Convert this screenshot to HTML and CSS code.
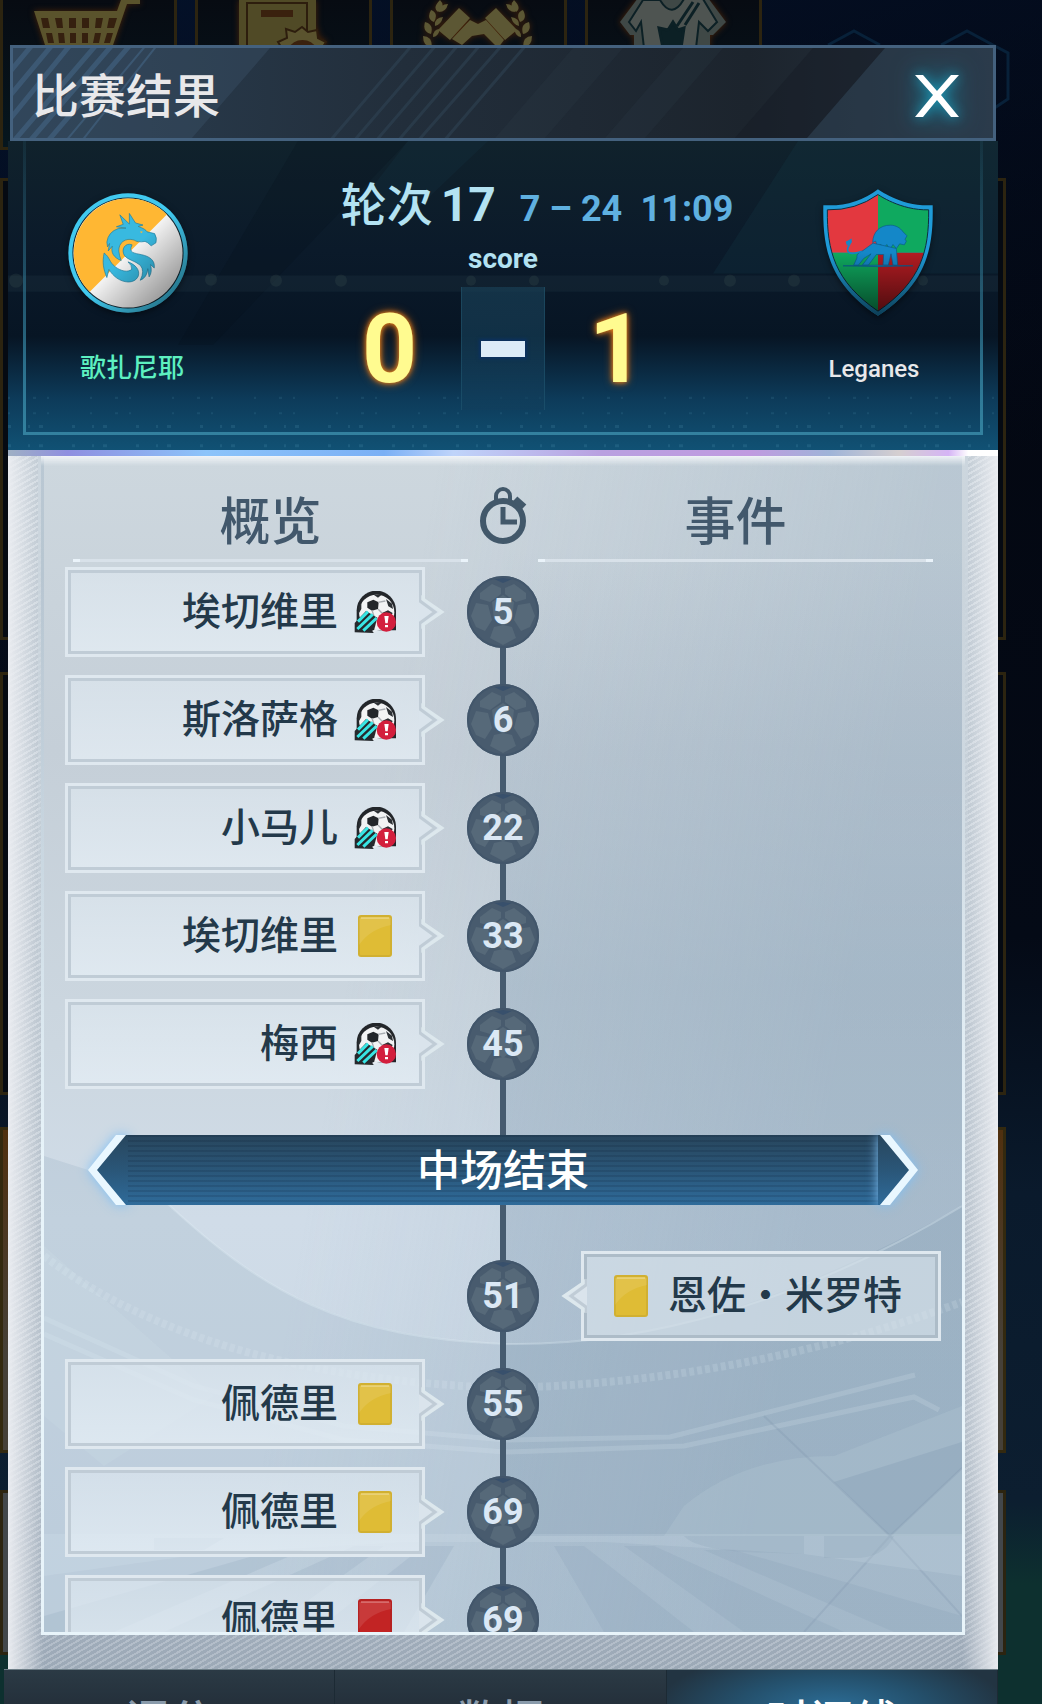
FILE: index.html
```
<!DOCTYPE html>
<html lang="zh-CN">
<head>
    <meta charset="UTF-8">
    <meta name="viewport" content="width=device-width, initial-scale=1.0">
    <title>比赛结果</title>
    <link rel="stylesheet" href="styles.css">
</head>
<body>
    <!-- shared shapes -->
    <svg class="defs" width="0" height="0" aria-hidden="true">
        <defs>
            <linearGradient id="shade" x1="0" y1="0" x2="1" y2="1">
                <stop offset="0.5" stop-color="#000" stop-opacity="0"/>
                <stop offset="1" stop-color="#000" stop-opacity="0.55"/>
            </linearGradient>
            <linearGradient id="shadeDown" x1="0" y1="0" x2="0" y2="1">
                <stop offset="0.5" stop-color="#000" stop-opacity="0"/>
                <stop offset="1" stop-color="#000" stop-opacity="0.6"/>
            </linearGradient>
            <linearGradient id="bar" x1="0" y1="0" x2="0" y2="1">
                <stop offset="0" stop-color="#28465d"/>
                <stop offset="0.5" stop-color="#2a5678"/>
                <stop offset="1" stop-color="#2f6b9a"/>
            </linearGradient>
            <symbol id="ball" viewBox="0 0 72 72">
                <circle cx="36" cy="36" r="36" fill="#485b6e"/>
                <g fill="#566979">
                    <path d="M25 26l11-7 11 7-2 17-9 7-9-7z"/>
                    <path d="M13 17l12-9 9 4v6l-11 8-10-3z"/>
                    <path d="M59 17L47 8l-9 4v6l11 8 10-3z"/>
                    <path d="M4 40l5-13 12 2 4 15-7 11-9-4z"/>
                    <path d="M68 40l-5-13-12 2-4 15 7 11 9-4z"/>
                    <path d="M27 51l9-2 9 2 4 11-13 7-13-7z"/>
                </g>
                <path d="M27 3l9 4 9-4-9-1z" fill="#38506c"/>
                <circle cx="36" cy="36" r="35" fill="none" stroke="#42566b" stroke-width="2"/>
            </symbol>
            <symbol id="chance" viewBox="0 0 126 126">
                <path d="M8 118V58a58 58 0 0 1 118 0v60z" fill="#23262a"/>
                <circle cx="68" cy="64" r="53" fill="#f2f3f4"/>
                <path d="M40 34l18-8 16 8-2 20-18 5-14-9z" fill="#23262a"/>
                <path d="M60 12h22l-10 8zM96 24l18 14 3 16-14-8zM14 48l8-12v18l-8 14zM84 66l18-8 14 8-8 14-20 2z" fill="#2c3034"/>
                <path d="M72 34l22-4M54 58l6 18M72 54l14 14" stroke="#a9adb2" stroke-width="4"/>
                <path d="M2 124V96l34-36 34 20-12 46z" fill="#26292d"/>
                <path d="M12 92l30-30M10 114l46-44M28 119l40-38" stroke="#38e5e4" stroke-width="9"/>
                <path d="M56 121l24-8" stroke="#e7edf2" stroke-width="6"/>
                <circle cx="97" cy="93" r="29" fill="#d31f3d"/>
                <path d="M91 75h13l-3 22h-7zM93 102h9v7h-9z" fill="#fff"/>
            </symbol>
            <symbol id="card" viewBox="0 0 34 42">
                <rect width="34" height="42" rx="3" fill="currentColor"/>
                <path d="M1 30Q12 14 33 10V3H1z" fill="#fff" fill-opacity="0.1"/>
                <path d="M3 2h28v2H3z" fill="#fff" fill-opacity="0.25"/>
                <rect x="1" y="1" width="32" height="40" rx="2" fill="none" stroke="#000" stroke-opacity="0.06" stroke-width="2"/>
            </symbol>
            <symbol id="tip" viewBox="0 0 26 34">
                <path d="M0 1h4l1 3 17 13L5 30l-1 3H0z" fill="#dae4ec"/>
                <path d="M1 0v6l15 11L1 28v6" fill="none" stroke="#c0ccd6" stroke-width="3"/>
                <path d="M4 0v4l19 13L4 30v4" fill="none" stroke="#dde8ed" stroke-width="3"/>
            </symbol>
        </defs>
    </svg>

    <div class="screen">
        <!-- dimmed lobby menu -->
        <div class="lobby" aria-hidden="true">
            <div class="shortcuts">
                <div class="tile">
                    <svg width="170" height="48" viewBox="3 0 170 48" fill="#5a532c">
                        <path d="M34 11h83l5-14h18v7h-13l-15 44H46z"/>
                        <path d="M41 18h7l2 10h-7zM55 18h7l1 10h-6zM69 18h7v10h-7zM82 18h7v10h-7zM96 18h7l-2 10h-6zM109 18h8l-3 10h-7zM46 33h6l2 10h-6zM58 33h6l1 10h-6zM70 33h6v10h-6zM82 33h6v10h-6zM95 33h6l-2 10h-6zM107 33h6l-3 10h-6z" fill="#35200f"/>
                    </svg>
                </div>
                <div class="tile">
                    <svg width="170" height="48" viewBox="198 0 170 48">
                        <path d="M239-2h77v50h-77z" fill="#504a26"/>
                        <path d="M247 48V3h60v32" fill="none" stroke="#2d1d0d" stroke-width="2"/>
                        <path d="M261 10h32v7h-32z" fill="#3a210e"/>
                        <path d="M278 42l9-4-1-9 9 3 7-5 6 5 9-2 1 8 8 4-5 8h-38z" fill="#5a532e" stroke="#2d1d0d" stroke-width="2"/>
                        <path d="M289 48a14 11 0 0 1 27 0z" fill="#3a210e"/>
                    </svg>
                </div>
                <div class="tile">
                    <svg width="170" height="48" viewBox="393 0 170 48" fill="#5c5734">
                        <path d="M459 8l11 10-20 22-12-10zM496 8l-11 10 20 22 12-10zM470 20l8 4 8-4 18 20-6 8-14-14-12 2-10 9-10-6z"/>
                        <path d="M440 0q6 6-2 12-6-4 2-12zM431 10q8 3 3 12-8-3-3-12zM425 22q9 2 6 12-9-2-6-12zM423 36q9 0 9 11-9 0-9-11zM448 4q-2 8-9 8 1-8 9-8zM443 17q-2 8-8 9-1-8 8-9zM440 29q-2 8-7 8 0-8 7-8z"/>
                        <path d="M514 0q-6 6 2 12 6-4-2-12zM523 10q-8 3-3 12 8-3 3-12zM529 22q-9 2-6 12 9-2 6-12zM532 36q-9 0-9 11 9 0 9-11zM506 4q2 8 9 8-1-8-9-8zM511 17q2 8 8 9 1-8-8-9zM514 29q2 8 7 8 0-8-7-8z"/>
                    </svg>
                </div>
                <div class="tile">
                    <svg width="170" height="48" viewBox="588 0 170 48" fill="#3f4846">
                        <path d="M620 22l18-24h70l18 24-13 13h-3v13h-76V35h-4z"/>
                        <path d="M629 22l14-22h17q12 20 24-1h19l14 23-9 9-9-9-3 26h-52l-3-26-5 9z" fill="#4e5451" stroke="#0c2025" stroke-width="2"/>
                        <path d="M668 30l5-8 5 8 6-2-3 20h-18l-4-20zM693 2l-16 24M699 3l-14 22" fill="#0c2025" stroke="#0c2025" stroke-width="3"/>
                    </svg>
                </div>
                <svg class="hexes" width="260" height="110" viewBox="782 0 260 110" fill="none" stroke="#082139" stroke-width="3">
                    <path d="M826 45l26-14 26 14M939 45l26-14 26 14 15 8v46l-15 10"/>
                </svg>
            </div>
            <div class="block block-a"></div>
            <div class="block block-b"></div>
            <div class="block block-c"></div>
            <div class="block block-d"></div>
        </div>

        <main class="dialog">
            <header class="titlebar">
                <svg class="art" viewBox="0 0 980 90" preserveAspectRatio="none" aria-hidden="true">
                    <path d="M0 0h257l-78 90H0z" fill="#3c5268" fill-opacity="0.4"/>
                    <g stroke="#456788" stroke-width="5" stroke-opacity="0.55">
                        <path d="M-40 68L20-4M-30 80L40-4M-20 92L58-4M0 94L84-4M16 94L100-4M34 94L118-4"/>
                        <path d="M52 94L134-4M68 94L145-4" stroke-width="2"/>
                    </g>
                    <g stroke="#34495c" stroke-width="3" stroke-opacity="0.45">
                        <path d="M316 94L400-4M340 94L424-4M362 94L446-4M384 94L468-4M404 94L490-4M430 94L514-4"/>
                    </g>
                    <path d="M560 0h50l-78 90h-50zM670 0h40l-78 90h-40z" fill="#33424e" fill-opacity="0.18"/>
                    <path d="M800 0h72l-78 90h-72z" fill="#151c25" fill-opacity="0.5"/>
                    <path d="M872 0h108v90H794z" fill="#30475a" fill-opacity="0.45"/>
                </svg>
                <h1>比赛结果</h1>
                <button class="close" type="button" aria-label="关闭">
                    <svg width="44" height="42" viewBox="0 0 44 42" aria-hidden="true">
                        <path d="M0 0h8l14 16L36 0h8L26 20l18 22h-8L22 25 8 42H0l18-22z" fill="#fff"/>
                    </svg>
                </button>
            </header>

            <section class="scoreboard">
                <svg class="art" viewBox="0 0 990 309" preserveAspectRatio="none" aria-hidden="true">
                    <path d="M290 0h110L205 200H170z" fill="#06101a" fill-opacity="0.2"/>
                    <path d="M400 0h80l-75 70h-60z" fill="#1d4454" fill-opacity="0.15"/>
                    <path d="M790 0h200v130H705z" fill="#17404e" fill-opacity="0.22"/>
                    <path d="M0 132h990v16H0z" fill="#35525f" fill-opacity="0.16"/>
                    <g fill="#6c8075" fill-opacity="0.12">
                        <circle cx="8" cy="137" r="7"/><circle cx="74" cy="138" r="6"/><circle cx="138" cy="138" r="5"/><circle cx="203" cy="136" r="6"/><circle cx="268" cy="137" r="6"/><circle cx="333" cy="137" r="6"/><circle cx="463" cy="137" r="5"/><circle cx="526" cy="137" r="5"/><circle cx="656" cy="137" r="5"/><circle cx="722" cy="137" r="6"/><circle cx="786" cy="137" r="6"/><circle cx="850" cy="137" r="5"/><circle cx="915" cy="137" r="5"/>
                    </g>
                    <path d="M0 252h990M0 267h990" stroke="#7ec6dd" stroke-width="2" stroke-opacity="0.1" stroke-dasharray="2 23 3 11 2 41"/>
                    <path d="M0 280h990M0 299h990" stroke="#7ec6dd" stroke-width="3" stroke-opacity="0.12" stroke-dasharray="3 17 2 9 4 29"/>
                </svg>
                <div class="frame">
                    <div class="team home">
                        <svg width="120" height="120" viewBox="0 0 352 352" aria-hidden="true">
                            <circle cx="176" cy="176" r="175" fill="#41c9ef"/>
                            <circle cx="176" cy="176" r="163" fill="#102733"/>
                            <circle cx="176" cy="176" r="160" fill="#f4f4f4"/>
                            <path d="M64 290A160 160 0 0 1 290 63z" fill="#ffb733"/>
                            <g transform="translate(-208 -46)" fill="#38b9e0" stroke="#1f7fa0" stroke-width="2">
                                <path d="M322 190Q326 160 356 150L378 149 350 145 370 138 360 110 388 137 388 106 406 134 428 140 414 144Q436 152 440 160L462 165Q470 178 466 192L452 201 442 192 434 188Q412 192 402 184C376 176 356 192 357 216Q358 230 364 244C342 236 333 220 338 202L326 216 330 194 324 204z"/>
                                <path d="M396 198C376 190 362 212 374 230 384 243 404 244 420 258Q434 274 420 302 440 294 442 268L446 292Q456 278 450 256L461 266C464 244 448 232 424 227 402 222 384 222 396 198z"/>
                                <path d="M314 222C332 236 328 248 346 262 362 275 384 280 395 270Q396 258 384 248C406 256 420 272 414 290 408 302 398 307 384 307 360 306 340 290 328 270L322 294C312 270 308 250 314 222z"/>
                            </g>
                            <path d="M420 158l8 2-6 4z" transform="translate(-208 -46)" fill="#ffb733"/>
                            <circle cx="176" cy="176" r="175" fill="url(#shade)"/>
                        </svg>
                        <p class="team-name">歌扎尼耶</p>
                    </div>

                    <div class="result">
                        <p class="round"><span class="label">轮次</span><span class="num">17</span><time>7 – 24&ensp;11:09</time></p>
                        <p class="caption">score</p>
                        <div class="goals">
                            <b>0</b>
                            <span class="dash"><i></i></span>
                            <b>1</b>
                        </div>
                    </div>

                    <div class="team away">
                        <svg width="110" height="127" viewBox="0 0 330 380" aria-hidden="true">
                            <g transform="translate(-906 -30)">
                                <path d="M1071 30Q1000 84 907 78C904 214 928 316 1071 410 1214 316 1238 214 1235 78 1142 84 1071 30 1071 30z" fill="#1f9bd8"/>
                                <clipPath id="shieldClip"><path d="M1071 46Q1004 94 919 92C918 214 940 306 1071 396 1202 306 1224 214 1223 92 1138 94 1071 46 1071 46z"/></clipPath>
                                <g clip-path="url(#shieldClip)">
                                    <path d="M906 30h165v191H906z" fill="#e3383f"/>
                                    <path d="M1071 30h165v191h-165z" fill="#0fa95f"/>
                                    <path d="M906 221h165v190H906z" fill="#0fa95f"/>
                                    <path d="M1071 221h165v190h-165z" fill="#b31c22"/>
                                </g>
                                <path d="M1071 46Q1004 94 919 92C918 214 940 306 1071 396 1202 306 1224 214 1223 92 1138 94 1071 46 1071 46z" fill="none" stroke="#0d3040" stroke-width="3"/>
                                <g fill="#1487c8" stroke="#0b5a8c" stroke-width="2">
                                    <path d="M1055 190C1056 158 1076 138 1108 138 1124 138 1138 146 1146 158L1158 170 1152 180 1156 186 1150 197 1136 194 1126 208 1116 196 1106 212 1098 196 1084 210 1080 196 1068 200 1064 186z"/>
                                    <path d="M1056 192L1026 214Q1004 224 1008 236L998 258H1012L1028 238 1050 224 1024 258H1042L1066 226 1088 226 1086 258H1102L1110 224 1116 258H1130L1126 208z"/>
                                    <path d="M966 260q100-4 210 0-100 5-210 0z"/>
                                </g>
                                <path d="M1022 216Q976 232 980 208L990 186" fill="none" stroke="#1487c8" stroke-width="5"/>
                                <path d="M974 188l18-10v12l-14 10z" fill="#1487c8"/>
                                <path d="M1071 30Q1000 84 907 78C904 214 928 316 1071 410 1214 316 1238 214 1235 78 1142 84 1071 30 1071 30z" fill="url(#shadeDown)"/>
                            </g>
                        </svg>
                        <p class="team-name">Leganes</p>
                    </div>
                </div>
            </section>

            <section class="sheet">
                <div class="panel">
                    <!-- stadium: bowl, roof, stands, boards, pitch -->
                    <svg class="art" viewBox="0 0 918 1176" preserveAspectRatio="none" aria-hidden="true">
                        <path d="M0 700L110 735C220 840 300 880 462 888V1176H0z" fill="#8aa3b8" fill-opacity="0.2"/>
                        <path d="M462 888C600 888 740 850 918 750V1080H462z" fill="#7d96ac" fill-opacity="0.22"/>
                        <path d="M110 735C220 840 300 882 462 888 600 890 760 846 918 750" fill="none" stroke="#e6f2f8" stroke-opacity="0.3" stroke-width="2"/>
                        <path d="M0 800Q160 922 462 932 700 926 918 846" fill="none" stroke="#e6f2f8" stroke-opacity="0.16" stroke-width="8" stroke-dasharray="5 3"/>
                        <path d="M0 862L150 930 300 970 462 984 626 981 871 919M0 878L150 944 300 984 462 996 640 990 870 941 895 954" fill="none" stroke="#e6f2f8" stroke-opacity="0.16" stroke-width="5"/>
                        <path d="M0 790L170 940 60 1010 0 960zM640 1050Q700 1000 790 1000L918 950V1080H620z" fill="#e6f2f8" fill-opacity="0.1"/>
                        <path d="M790 1026L918 986 918 1012 846 1080z" fill="#6d87a4" fill-opacity="0.2"/>
                        <path d="M720 960L846 1080 918 1160M846 1080L918 1012M846 1080L760 1176" fill="none" stroke="#6d879e" stroke-opacity="0.18" stroke-width="2"/>
                        <path d="M0 1078h918v42L760 1098 560 1086H360L160 1098 0 1120z" fill="#e6f2f8" fill-opacity="0.14"/>
                        <path d="M640 1080h120v18l-60-2q-50-4-60-16zM780 1080h70q-10 22-40 22h-30zM110 1082h70l-20 12h-50z" fill="#8aa3b8" fill-opacity="0.25"/>
                        <path d="M510 1090h30L650 1176H560zM580 1090h30L800 1176H700zM660 1094h30L918 1160V1176H850zM410 1090h-30L270 1176h90zM340 1090h-30L120 1176h100zM260 1094h-30L0 1160v16h70z" fill="#7d96ac" fill-opacity="0.16"/>
                    </svg>
                    <div class="heads">
                        <h2>概览</h2>
                        <svg width="48" height="57" viewBox="0 0 48 57" fill="none" stroke="#42586a" aria-label="时间" role="img">
                            <circle cx="24" cy="34" r="20" stroke-width="6"/>
                            <path d="M17 13V9a7 7 0 0 1 14 0v4" stroke-width="4"/>
                            <path d="M24 20v15h14" stroke-width="5"/>
                            <path d="M36 12l9 8" stroke-width="7"/>
                        </svg>
                        <h2>事件</h2>
                    </div>

                    <ol class="events">
                        <li class="event home-event">
                            <div class="bubble"><span>埃切维里</span><svg class="icon"><use href="#chance"/></svg><svg class="tip"><use href="#tip"/></svg></div>
                            <div class="minute"><svg><use href="#ball"/></svg><span>5</span></div>
                        </li>
                        <li class="event home-event">
                            <div class="bubble"><span>斯洛萨格</span><svg class="icon"><use href="#chance"/></svg><svg class="tip"><use href="#tip"/></svg></div>
                            <div class="minute"><svg><use href="#ball"/></svg><span>6</span></div>
                        </li>
                        <li class="event home-event">
                            <div class="bubble"><span>小马儿</span><svg class="icon"><use href="#chance"/></svg><svg class="tip"><use href="#tip"/></svg></div>
                            <div class="minute"><svg><use href="#ball"/></svg><span>22</span></div>
                        </li>
                        <li class="event home-event">
                            <div class="bubble"><span>埃切维里</span><svg class="icon yellow"><use href="#card"/></svg><svg class="tip"><use href="#tip"/></svg></div>
                            <div class="minute"><svg><use href="#ball"/></svg><span>33</span></div>
                        </li>
                        <li class="event home-event">
                            <div class="bubble"><span>梅西</span><svg class="icon"><use href="#chance"/></svg><svg class="tip"><use href="#tip"/></svg></div>
                            <div class="minute"><svg><use href="#ball"/></svg><span>45</span></div>
                        </li>
                        <li class="halftime">
                            <svg class="cap" viewBox="0 0 40 70" aria-hidden="true"><path d="M40 0h-3L7 35l30 35h3z" fill="url(#bar)"/><path d="M28 0h10L9 35l29 35H28L0 35z" fill="#e9f7ff"/></svg>
                            <strong>中场结束</strong>
                            <svg class="cap" viewBox="0 0 40 70" aria-hidden="true"><path d="M0 0h3l30 35L3 70H0z" fill="url(#bar)"/><path d="M12 0H2l29 35L2 70h10l28-35z" fill="#e9f7ff"/></svg>
                        </li>
                        <li class="event away-event">
                            <div class="minute"><svg><use href="#ball"/></svg><span>51</span></div>
                            <div class="bubble"><svg class="icon yellow"><use href="#card"/></svg><span>恩佐·米罗特</span><svg class="tip"><use href="#tip"/></svg></div>
                        </li>
                        <li class="event home-event">
                            <div class="bubble"><span>佩德里</span><svg class="icon yellow"><use href="#card"/></svg><svg class="tip"><use href="#tip"/></svg></div>
                            <div class="minute"><svg><use href="#ball"/></svg><span>55</span></div>
                        </li>
                        <li class="event home-event">
                            <div class="bubble"><span>佩德里</span><svg class="icon yellow"><use href="#card"/></svg><svg class="tip"><use href="#tip"/></svg></div>
                            <div class="minute"><svg><use href="#ball"/></svg><span>69</span></div>
                        </li>
                        <li class="event home-event">
                            <div class="bubble"><span>佩德里</span><svg class="icon red"><use href="#card"/></svg><svg class="tip"><use href="#tip"/></svg></div>
                            <div class="minute"><svg><use href="#ball"/></svg><span>69</span></div>
                        </li>
                    </ol>
                </div>
            </section>

            <nav class="tabs">
                <button type="button">评分</button>
                <button type="button">数据</button>
                <button type="button" class="active">时间线</button>
            </nav>
        </main>
    </div>
</body>
</html>
```
FILE: styles.css
```
* {
    box-sizing: border-box;
}
body {
    margin: 0;
    background: #040812;
    font-family: "Noto Sans CJK SC", "Noto Sans", sans-serif;
    font-weight: 500;
    color: #23394a;
}
h1, h2, p, ol {
    margin: 0;
    padding: 0;
    font-weight: 500;
}
button {
    border: 0;
    padding: 0;
    background: none;
    font: inherit;
    cursor: pointer;
}
.defs {
    position: absolute;
}
.art {
    position: absolute;
    inset: 0;
    width: 100%;
    height: 100%;
}
.screen {
    display: grid;
    grid-template: 100vh / 100%;
    overflow: hidden;
}

/* lobby behind the dialog */
.lobby {
    grid-area: 1 / 1;
    overflow: hidden;
    background: linear-gradient(160deg, rgba(4, 20, 48, 0.8) 0%, rgba(3, 6, 15, 0) 40%), linear-gradient(#03060f 0%, #040a16 55%, #0a1a2c 70%, #0c1e30 88%, #0d302f 93%);
}
.shortcuts {
    display: flex;
    gap: 18px;
    height: 150px;
}
.tile {
    flex: none;
    width: 177px;
    border: 3px solid #2c2410;
    border-top: 0;
    background: linear-gradient(#070b12, #06161e);
}
.tile svg {
    filter: drop-shadow(0 0 3px #4a2408);
}
.hexes {
    flex: none;
    margin-left: 4px;
}
.block {
    margin: 28px 36px 0 0;
    border: 3px solid #2c2410;
    background: #050a12;
}
.block-a {
    height: 462px;
}
.block-b {
    margin-top: 32px;
    height: 423px;
}
.block-c {
    margin-top: 32px;
    height: 326px;
    border-color: #33290f;
    background: linear-gradient(#50300f, #454038 70%);
}
.block-d {
    margin-top: 37px;
    height: 165px;
    background: #42474b;
}

/* dialog */
.dialog {
    grid-area: 1 / 1;
    position: relative;
    display: flex;
    flex-direction: column;
    height: 100vh;
    padding: 45px 44px 0 8px;
}
.titlebar {
    position: relative;
    flex: none;
    display: flex;
    align-items: center;
    justify-content: space-between;
    height: 96px;
    margin: 0 2px;
    padding: 0 34px 0 19px;
    border: 3px solid #44617e;
    background: linear-gradient(90deg, #2b3f52, #222e3b 40%, #1c242d 75%, #27323f);
}
.titlebar h1 {
    position: relative;
    font-size: 47px;
    line-height: 60px;
    color: #e8e8ea;
}
.close {
    position: relative;
    height: 42px;
    margin-top: 6px;
    filter: drop-shadow(0 0 6px #1c9dbb) drop-shadow(0 0 12px #16809c);
}
.close svg {
    display: block;
}

.scoreboard {
    position: relative;
    flex: none;
    height: 315px;
    padding: 0 15px 21px;
    background: linear-gradient(#10222c 0%, #0b1a2a 35%, #071524 62%, #0d3b5a 82%, #115477 100%);
}
.scoreboard::after {
    content: "";
    position: absolute;
    left: 0;
    right: 0;
    bottom: 0;
    height: 6px;
    background: linear-gradient(90deg, #9fb0c4, #8f8fe0 6%, #8cc4fa 20%, #7ab0f5 38%, #bfd4fa 45%, #b9a0e0 60%, #c09ae0 75%, #9fb4d8 83%, #d5cfd0 90%, #d5b4f5 95%, #fff 97%);
}
.frame {
    position: relative;
    height: 100%;
    display: grid;
    grid-template-columns: 212px 1fr 212px;
    border: 3px solid;
    border-image: linear-gradient(rgba(60, 140, 165, 0.1), #33819f) 1;
    border-top: 0;
}
.team {
    display: flex;
    flex-direction: column;
    align-items: center;
    padding-top: 52px;
}
.team svg {
    flex: none;
    filter: drop-shadow(0 2px 3px rgba(0, 0, 0, 0.5));
}
.home svg {
    margin: 0 8px 34px 0;
}
.away {
    padding-top: 48px;
}
.away svg {
    margin: 0 0 34px 8px;
}
.team-name {
    font-size: 26px;
    line-height: 38px;
    color: #5df0c0;
}
.away .team-name {
    font-family: Roboto, sans-serif;
    font-size: 24px;
    color: #e8e8ea;
}
.result {
    display: flex;
    flex-direction: column;
    align-items: center;
    padding-top: 30px;
}
.round {
    display: flex;
    align-items: baseline;
    padding-left: 68px;
    white-space: nowrap;
    line-height: 60px;
    color: #b3e2f2;
}
.round .label {
    font-size: 46px;
}
.round .num, .round time {
    font-family: Roboto, sans-serif;
    font-weight: 700;
}
.round .num {
    margin: 0 24px 0 8px;
    font-size: 48px;
}
.round time {
    font-size: 36px;
    color: #5fb0e0;
}
.caption {
    font-family: Roboto, sans-serif;
    font-weight: 700;
    font-size: 28px;
    line-height: 40px;
    color: #b3e2f2;
}
.goals {
    display: grid;
    grid-template-columns: 1fr 84px 1fr;
    gap: 44px;
    align-items: center;
    width: 100%;
    margin-top: 8px;
}
.goals b {
    font-family: Roboto, sans-serif;
    font-size: 96px;
    line-height: 100px;
    color: #fffb90;
    text-shadow: 0 0 5px #f08a20, 0 0 10px #c06010;
}
.goals b:first-child {
    text-align: right;
}
.dash {
    display: grid;
    place-items: center;
    height: 123px;
    border: solid rgba(40, 100, 125, 0.4);
    border-width: 0 1px;
    background: linear-gradient(rgba(24, 62, 84, 0.7), rgba(17, 62, 92, 0.6));
}
.dash i {
    width: 44px;
    height: 16px;
    background: #dcebf8;
    box-shadow: 0 0 3px 2px #0b3162;
}

/* timeline */
.sheet {
    flex: 1;
    min-height: 0;
    display: flex;
    padding: 0 33px 34px;
    background:
        linear-gradient(rgba(204, 214, 222, 1), rgba(204, 214, 222, 0) 55%) center / calc(100% - 60px) 100% no-repeat,
        linear-gradient(90deg, rgba(236, 238, 242, 0.95), rgba(236, 238, 242, 0) 36px, rgba(236, 238, 242, 0) calc(100% - 36px), rgba(236, 238, 242, 0.95)),
        repeating-linear-gradient(150deg, rgba(255, 255, 255, 0.1) 0 2px, rgba(70, 90, 110, 0.12) 2px 5px),
        linear-gradient(#ccd6de, #c0cad4 80%, #a8b4c1);
}
.panel {
    position: relative;
    flex: 1;
    overflow: hidden;
    border: 3px solid;
    border-top: 0;
    border-image: linear-gradient(rgba(232, 244, 250, 0) 10%, rgba(232, 244, 250, 0.4) 35%, #e8f4fa 60%) 1;
    background:
        linear-gradient(rgba(244, 247, 250, 0.9), rgba(244, 247, 250, 0) 10px),
        linear-gradient(rgba(120, 148, 172, 0) 8%, rgba(120, 148, 172, 0.3) 45%) right / 50% 100% no-repeat,
        linear-gradient(100deg, rgba(160, 178, 194, 0) 35%, rgba(150, 172, 190, 0.35) 80%),
        linear-gradient(#cdd7de, #c5cfd8 25%, #ccd7e0 50%, #d0dce8 65%, #c8d7e4);
}
.heads {
    position: relative;
    display: grid;
    grid-template-columns: 1fr 70px 1fr;
    height: 106px;
    padding: 0 29px;
}
.heads h2 {
    padding-top: 30px;
    border-bottom: 3px solid;
    border-image: linear-gradient(90deg, #eaf3fa 8px, #d8e1e9 8px calc(100% - 8px), #eaf3fa calc(100% - 8px)) 1;
    font-size: 51px;
    line-height: 64px;
    text-align: center;
    color: #42586c;
}
.heads svg {
    justify-self: center;
    margin-top: 31px;
}
.events {
    position: relative;
    margin-top: -4px;
    padding: 0 21px;
    list-style: none;
    background: linear-gradient(#465b6f, #465b6f) center 54px / 6px 100% no-repeat;
}
.event {
    display: grid;
    grid-template-columns: 1fr 72px 1fr;
    column-gap: 42px;
    align-items: center;
    height: 108px;
}
.minute {
    grid-column: 2;
    grid-row: 1;
    display: grid;
    place-items: center;
    height: 72px;
    font-family: Roboto, sans-serif;
    font-weight: 700;
    font-size: 36px;
    line-height: 72px;
    color: #dbe8f5;
}
.minute svg, .minute span {
    grid-area: 1 / 1;
}
.minute svg {
    width: 72px;
    height: 72px;
}
.bubble {
    position: relative;
    display: flex;
    align-items: center;
    justify-content: flex-end;
    height: 90px;
    padding: 0 26px;
    border: 3px solid #dfe8ef;
    background: linear-gradient(rgba(222, 232, 240, 0.65), rgba(230, 239, 246, 0.75));
    box-shadow: inset 0 0 0 3px #c0ccd6;
    font-size: 39px;
    line-height: 52px;
    white-space: nowrap;
}
.bubble span {
    padding-bottom: 8px;
}
.away-event .bubble {
    grid-column: 3;
    justify-content: flex-start;
    background: rgba(218, 229, 237, 0.65);
    box-shadow: inset 0 0 0 3px #adbcc8;
}
.icon {
    width: 42px;
    height: 42px;
    margin-left: 16px;
}
.away-event .icon {
    margin: 0 16px 0 0;
}
.yellow {
    color: #dfbc35;
}
.red {
    color: #c22424;
}
.tip {
    position: absolute;
    right: -23px;
    top: 25px;
    width: 26px;
    height: 34px;
}
.away-event .tip {
    right: auto;
    left: -23px;
    transform: scaleX(-1);
}
.halftime {
    display: flex;
    align-items: center;
    height: 144px;
    padding: 0 23px;
}
.halftime strong {
    position: relative;
    flex: 1;
    height: 70px;
    background: repeating-linear-gradient(rgba(0, 10, 30, 0.12) 0 2px, transparent 2px 5px), linear-gradient(#28465d, #2a5678 50%, #2f6b9a);
    font-size: 43px;
    font-weight: 500;
    line-height: 64px;
    text-align: center;
    color: #fff;
}
.cap {
    width: 40px;
    height: 70px;
    filter: drop-shadow(0 0 6px #7fc0f5);
}

.tabs {
    flex: none;
    display: grid;
    grid-template-columns: 1fr 1fr 1fr;
    height: 35px;
    margin-left: -4px;
    overflow: hidden;
    border-top: 1px solid #6f7f88;
    background: linear-gradient(#2b3a45, #24303b);
}
.tabs button {
    height: 96px;
    border-right: 1px solid #1c2a34;
    font-size: 44px;
    line-height: 96px;
    color: #8a9bab;
}
.tabs .active {
    background: radial-gradient(ellipse at 50% 40%, #2c6e98, #24506c 40%, #223442 75%);
    color: #fff;
}
```
